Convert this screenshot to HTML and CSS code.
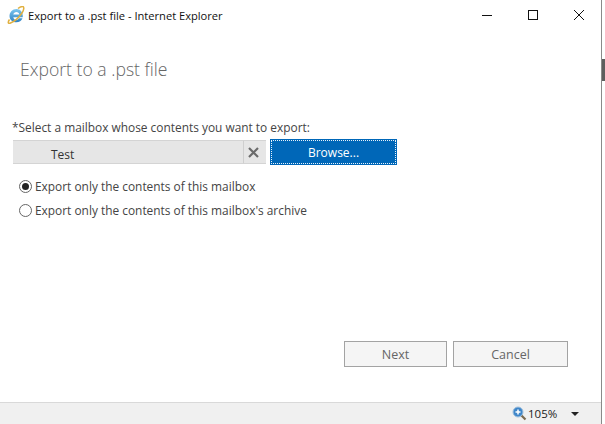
FILE: index.html
```html
<!DOCTYPE html>
<html lang="en">
<head>
    <meta charset="UTF-8">
    <meta name="viewport" content="width=device-width, initial-scale=1.0">
    <title>Export to a .pst file - Internet Explorer</title>
    <link rel="stylesheet" href="styles.css">
</head>
<body>
    <div class="window">
        <div class="titlebar">
            <svg class="ie-icon" width="18" height="18" viewBox="0 0 18 18">
                <defs>
                    <linearGradient id="ieBlue" x1="0" y1="0" x2="0" y2="1">
                        <stop offset="0" stop-color="#7cc6ee"/>
                        <stop offset="1" stop-color="#2f82c4"/>
                    </linearGradient>
                </defs>
                <path d="M9.500 3C5.500 3 2.500 6.300 2.500 10c0 3.800 3 6.300 6.800 6.300 3 0 5.200-1.500 6.200-4h-3.600c-.6 1-1.500 1.500-2.700 1.500-1.500 0-2.700-1-2.900-2.600h9.400c.1-.5.100-.9.100-1.300C15.800 5.800 13 3 9.500 3zM6.300 8.500c.3-1.500 1.500-2.600 3.100-2.600s2.800 1.100 3 2.600z" fill="url(#ieBlue)" fill-rule="evenodd"/>
                <path d="M2.500 13.500C.5 16.500 1 18 3.500 17c3-1.200 8.500-5.500 11.500-10 2-3 2.500-6.500.5-6.500-1.300 0-3 .8-4.500 2" fill="none" stroke="#e0b040" stroke-width="1.500"/>
            </svg>
            <span class="window-title">Export to a .pst file - Internet Explorer</span>
            <div class="window-controls">
                <svg width="12" height="12" viewBox="0 0 12 12"><path d="M1 6.500h10" stroke="#111" fill="none"/></svg>
                <svg width="12" height="12" viewBox="0 0 12 12"><rect x="1.500" y="1.500" width="9" height="9" stroke="#111" fill="none"/></svg>
                <svg width="12" height="12" viewBox="0 0 12 12"><path d="M1 1l10 10M11 1L1 11" stroke="#111" fill="none"/></svg>
            </div>
        </div>

        <div class="content">
            <h1>Export to a .pst file</h1>

            <div class="field-label">*Select a mailbox whose contents you want to export:</div>
            <div class="picker">
                <div class="picker-value">Test</div>
                <div class="picker-clear">
                    <svg width="11" height="11" viewBox="0 0 11 11"><path d="M1 1l9 9M10 1l-9 9" stroke="#6b6b6b" stroke-width="2.200" fill="none"/></svg>
                </div>
                <button class="browse-button"><span>Browse...</span></button>
            </div>

            <div class="options">
                <label class="option"><span class="radio checked"></span>Export only the contents of this mailbox</label>
                <label class="option"><span class="radio"></span>Export only the contents of this mailbox's archive</label>
            </div>

            <div class="actions">
                <button class="action-button next">Next</button>
                <button class="action-button cancel">Cancel</button>
            </div>
        </div>

        <div class="statusbar">
            <svg width="15" height="15" viewBox="0 0 15 15">
                <path d="M9 9l4.500 4.500" stroke="#7a6a50" stroke-width="2.200" fill="none"/>
                <circle cx="6" cy="6" r="5" fill="#3f86c9" stroke="#9fc0dd"/>
                <path d="M3.500 6h5M6 3.500v5" stroke="#fff" stroke-width="1.500" fill="none"/>
            </svg>
            <span class="zoom-level">105%</span>
            <span class="zoom-arrow"></span>
        </div>
    </div>
    <div class="edge">
        <div class="edge-thumb"></div>
    </div>
</body>
</html>
```

FILE: styles.css
```css
html, body {
    height: 100%;
}
body {
    margin: 0;
    display: flex;
    overflow: hidden;
    background-color: white;
    color: #333;
    font-family: "Open Sans", "Noto Sans", sans-serif;
    font-size: 12px;
}
.window {
    width: 601px;
    height: 424px;
    display: flex;
    flex-direction: column;
    border-right: 1px solid #8a8a8a;
}
.edge {
    flex: 1;
    padding-top: 59px;
}
.edge-thumb {
    height: 22px;
    background-color: #5e5e5e;
}
.titlebar {
    height: 30px;
    display: flex;
    align-items: center;
    padding-left: 7px;
    flex: none;
}
.ie-icon {
    margin-right: 3px;
}
.window-title {
    color: #111;
    font-size: 11.130px;
}
.window-controls {
    margin-left: auto;
    display: flex;
    gap: 34px;
    padding-right: 16px;
}
.content {
    flex: 1;
    display: flex;
    flex-direction: column;
    padding-left: 12px;
}
h1 {
    margin: 26px 0 0 8px;
    font-size: 17.600px;
    font-weight: 300;
    line-height: 26px;
    color: #666;
}
.field-label {
    margin-top: 37px;
    line-height: 16px;
    font-size: 11.900px;
    color: #444;
}
.picker {
    margin: 4px 0 0 1px;
    display: flex;
    align-items: center;
    height: 26px;
}
.picker-value {
    box-sizing: border-box;
    width: 230px;
    height: 24px;
    padding-left: 38px;
    background-color: #e6e6e6;
    border-top: 1px solid #d4d4d4;
    border-bottom: 1px solid #d4d4d4;
    line-height: 27px;
    font-size: 12px;
    color: #333;
}
.picker-clear {
    box-sizing: border-box;
    width: 23px;
    height: 24px;
    padding-right: 3px;
    display: flex;
    align-items: center;
    justify-content: center;
    background-color: #e6e6e6;
    border-left: 1px solid #cfcfcf;
    border-top: 1px solid #d4d4d4;
    border-bottom: 1px solid #d4d4d4;
}
.browse-button {
    margin-left: 4px;
    width: 127px;
    height: 26px;
    padding: 1px;
    background-color: #0067b8;
    border: none;
    color: white;
    font-family: inherit;
    font-size: 12px;
}
.browse-button span {
    display: block;
    height: 100%;
    line-height: 24px;
    border: 1px dotted #e8f2fa;
    box-sizing: border-box;
}
.options {
    margin: 12px 0 0 7px;
    display: flex;
    flex-direction: column;
    gap: 6px;
}
.option {
    display: flex;
    align-items: center;
    height: 18px;
    font-size: 11.900px;
    color: #444;
}
.radio {
    flex: none;
    box-sizing: border-box;
    width: 13px;
    height: 13px;
    margin-right: 3px;
    border: 1px solid #666;
    border-radius: 50%;
    background-color: white;
    display: flex;
    align-items: center;
    justify-content: center;
}
.radio.checked:before {
    content: "";
    width: 7px;
    height: 7px;
    border-radius: 50%;
    background-color: #222;
}
.actions {
    margin: auto 0 35px 332px;
    display: flex;
    gap: 6px;
}
.action-button {
    height: 26px;
    background-color: #f5f5f5;
    border: 1px solid #a3a3a3;
    color: #666;
    font-family: inherit;
    font-size: 12.500px;
    padding: 0;
}
.next {
    width: 103px;
}
.cancel {
    width: 115px;
}
.statusbar {
    flex: none;
    height: 21px;
    display: flex;
    align-items: center;
    background-color: #f0f0f0;
    border-top: 1px solid #d9d9d9;
    padding-left: 512px;
}
.zoom-level {
    margin-left: 1px;
    font-size: 11.500px;
    color: #222;
}
.zoom-arrow {
    margin-left: 14px;
    width: 0;
    height: 0;
    border-left: 4px solid transparent;
    border-right: 4px solid transparent;
    border-top: 4px solid #222;
}
```
